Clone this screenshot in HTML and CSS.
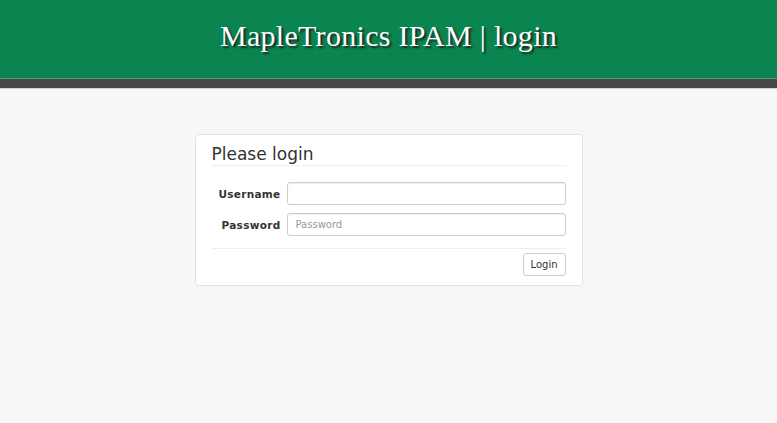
FILE: index.html
```html
<!DOCTYPE html>
<html lang="en">
<head>
    <meta charset="UTF-8">
    <meta name="viewport" content="width=device-width, initial-scale=1.0">
    <title>MapleTronics IPAM | login</title>
    <link rel="stylesheet" href="styles.css">
</head>
<body>
  <div class="header">
    <h1>MapleTronics IPAM | login</h1>
  </div>
  <div class="subbar"></div>

  <div class="login">
    <h2>Please login</h2>
    <form id="loginForm">
      <div class="row">
        <label for="username">Username</label>
        <input type="text" id="username" name="username">
      </div>
      <div class="row">
        <label for="password">Password</label>
        <input type="password" id="password" name="password" placeholder="Password">
      </div>
      <div class="actions">
        <button type="button">Login</button>
      </div>
    </form>
  </div>
</body>
</html>
```

FILE: styles.css
```css
body {
    font-family: "DejaVu Sans", Verdana, sans-serif;
    background-color: #f7f7f7;
    margin: 0;
    color: #333;
}

.header {
    background-color: #0a8550;
    height: 78px;
    border-bottom: 1px solid #5a9a78;
    display: flex;
    align-items: center;
    justify-content: center;
}

.header h1 {
    margin: 0 0 6px 0;
    font-family: "Liberation Serif", Georgia, serif;
    font-weight: normal;
    font-size: 30px;
    letter-spacing: 0.3px;
    color: #fff;
    text-shadow: 2px 2px 2px #222;
}

.subbar {
    height: 9px;
    background-color: #45484b;
    border-bottom: 1px solid #d0d0d0;
}

.login {
    width: 354px;
    margin: 45px auto 0 auto;
    background-color: #fff;
    border: 1px solid #e2e2e2;
    border-radius: 4px;
    padding: 7px 16px 9px 16px;
}

.login h2 {
    font-size: 17px;
    font-weight: normal;
    margin: 2px 0 0 0;
    padding-bottom: 1px;
    border-bottom: 1px solid #eee;
    color: #333;
}

form {
    margin-top: 16px;
}

.row {
    display: flex;
    align-items: center;
    margin-bottom: 8px;
}

label {
    width: 69px;
    padding-right: 6px;
    text-align: right;
    font-size: 10.5px;
    font-weight: bold;
    letter-spacing: 0.3px;
    color: #333;
}

input {
    flex: 1;
    height: 23px;
    box-sizing: border-box;
    border: 1px solid #ccc;
    border-radius: 3px;
    padding: 0 8px;
    font-family: "DejaVu Sans", Verdana, sans-serif;
    font-size: 10px;
    box-shadow: inset 0 1px 1px rgba(0, 0, 0, 0.075);
}

input::placeholder {
    color: #999;
}

.actions {
    border-top: 1px solid #eee;
    margin-top: 12px;
    padding-top: 4px;
    display: flex;
    justify-content: flex-end;
}

button {
    font-family: "DejaVu Sans", Verdana, sans-serif;
    font-size: 10px;
    color: #333;
    background-color: #fff;
    border: 1px solid #ccc;
    border-radius: 3px;
    height: 23px;
    padding: 0 7px;
    cursor: pointer;
}

button:hover {
    background-color: #f0f0f0;
}
```
